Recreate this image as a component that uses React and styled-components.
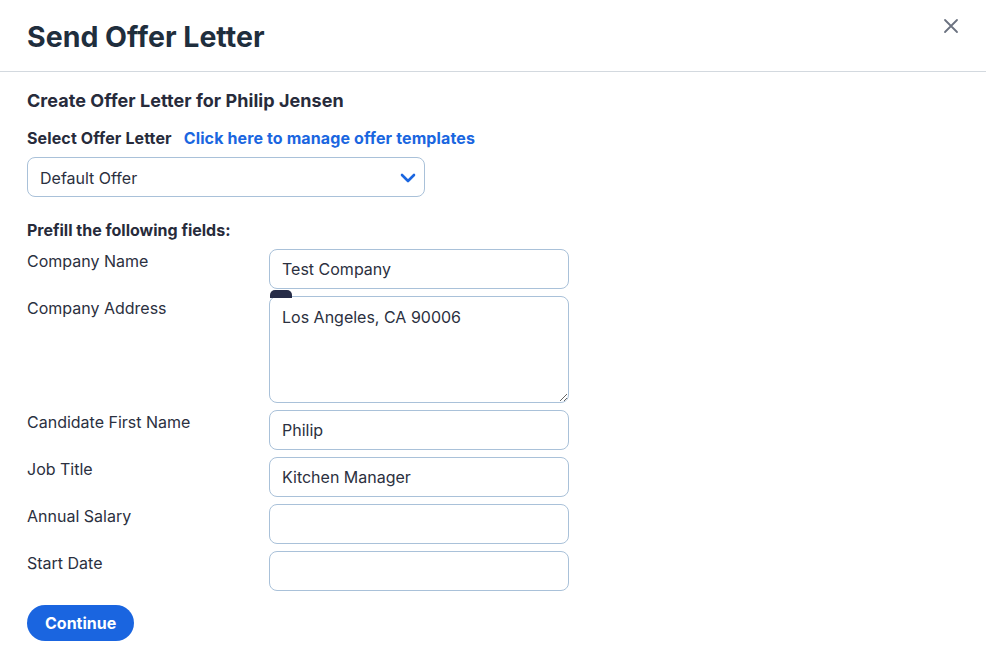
import styled, { createGlobalStyle } from 'styled-components';

const GlobalStyle = createGlobalStyle`
  body {
    margin: 0;
    background: #fff;
    font-family: 'Inter', 'Noto Sans', sans-serif;
    color: #2b3040;
  }
`;

const fields = [
  { label: 'Company Name', value: 'Test Company' },
  { label: 'Company Address', value: 'Los Angeles, CA 90006', multiline: true },
  { label: 'Candidate First Name', value: 'Philip' },
  { label: 'Job Title', value: 'Kitchen Manager' },
  { label: 'Annual Salary', value: '' },
  { label: 'Start Date', value: '' },
];

const App = () => {
  return (
    <>
      <GlobalStyle />
      <Modal>
        <Header>
          <Title>Send Offer Letter</Title>
          <CloseButton aria-label='Close'>
            <svg width='16' height='16' viewBox='0 0 16 16'>
              <path
                d='M2 2 L14 14 M14 2 L2 14'
                stroke='#6b7280'
                strokeWidth='1.8'
                strokeLinecap='round'
              />
            </svg>
          </CloseButton>
        </Header>
        <Body>
          <Heading>Create Offer Letter for Philip Jensen</Heading>
          <SelectRow>
            <BoldLabel>Select Offer Letter</BoldLabel>
            <Link href='#'>Click here to manage offer templates</Link>
          </SelectRow>
          <Select>
            <span>Default Offer</span>
            <svg width='16' height='10' viewBox='0 0 16 10'>
              <path
                d='M2 2 L8 8 L14 2'
                fill='none'
                stroke='#1a66e0'
                strokeWidth='2.6'
                strokeLinecap='round'
                strokeLinejoin='round'
              />
            </svg>
          </Select>
          <PrefillTitle>Prefill the following fields:</PrefillTitle>
          <FieldGrid>
            {fields.map((f) => (
              <Field key={f.label}>
                <FieldLabel>{f.label}</FieldLabel>
                {f.multiline ? (
                  <TextAreaWrap>
                    <Tab />
                    <TextArea defaultValue={f.value} />
                  </TextAreaWrap>
                ) : (
                  <Input defaultValue={f.value} />
                )}
              </Field>
            ))}
          </FieldGrid>
          <ContinueButton>Continue</ContinueButton>
        </Body>
      </Modal>
    </>
  );
};

const Modal = styled.div`
  width: 986px;
  height: 650px;
  background: #fff;
`;

const Header = styled.div`
  display: flex;
  align-items: center;
  height: 72px;
  padding: 0 26px 0 27px;
  border-bottom: 1px solid #d3d9df;
  box-sizing: border-box;
  position: relative;
`;

const Title = styled.h1`
  margin: 0;
  font-size: 28.5px;
  font-weight: 700;
  color: #1f2e3d;
  letter-spacing: 0;
  padding-top: 2px;
`;

const CloseButton = styled.button`
  position: absolute;
  top: 17px;
  right: 26px;
  border: none;
  background: none;
  padding: 0;
  width: 18px;
  height: 18px;
  display: flex;
  align-items: center;
  justify-content: center;
  cursor: pointer;
`;

const Body = styled.div`
  padding: 18px 27px 0 27px;
  display: flex;
  flex-direction: column;
  align-items: flex-start;
`;

const Heading = styled.h2`
  margin: 0;
  font-size: 18px;
  font-weight: 700;
  color: #272b3b;
  line-height: 22px;
  letter-spacing: 0.05px;
`;

const SelectRow = styled.div`
  display: flex;
  gap: 12px;
  margin-top: 16px;
  line-height: 20px;
  letter-spacing: 0.12px;
`;

const BoldLabel = styled.span`
  font-size: 16px;
  font-weight: 700;
  color: #272b3b;
`;

const Link = styled.a`
  font-size: 16px;
  font-weight: 700;
  color: #1a66e0;
  text-decoration: none;
`;

const Select = styled.div`
  margin-top: 9px;
  width: 398px;
  height: 40px;
  box-sizing: border-box;
  border: 1px solid #a9c1d9;
  border-radius: 8px;
  display: flex;
  align-items: center;
  justify-content: space-between;
  padding: 2px 8px 0 12px;
  font-size: 16px;
  color: #2b3040;
`;

const PrefillTitle = styled.div`
  margin-top: 23px;
  font-size: 16px;
  font-weight: 700;
  color: #272b3b;
  line-height: 20px;
`;

const FieldGrid = styled.div`
  display: flex;
  flex-direction: column;
  gap: 7px;
  margin-top: 9px;
`;

const Field = styled.div`
  display: grid;
  grid-template-columns: 242px 300px;
  align-items: start;
`;

const FieldLabel = styled.div`
  font-size: 16px;
  color: #2b3040;
  padding-top: 2px;
  line-height: 20px;
`;

const inputBase = `
  width: 300px;
  box-sizing: border-box;
  border: 1px solid #a9c1d9;
  border-radius: 8px;
  padding: 0 12px;
  font-family: 'Inter', 'Noto Sans', sans-serif;
  font-size: 16px;
  color: #2b3040;
  background: #fff;
  outline: none;
`;

const Input = styled.input`
  ${inputBase}
  height: 40px;
`;

const TextAreaWrap = styled.div`
  position: relative;
  display: flex;
`;

const Tab = styled.div`
  position: absolute;
  top: -6px;
  left: 1px;
  width: 22px;
  height: 8px;
  background: #262c47;
  border-radius: 5px 5px 0 0;
`;

const TextArea = styled.textarea`
  ${inputBase}
  height: 107px;
  padding-top: 10px;
  line-height: 20px;
  resize: vertical;
  display: block;
`;

const ContinueButton = styled.button`
  margin-top: 14px;
  height: 36px;
  padding: 0 18px;
  border: none;
  border-radius: 18px;
  background: #1a65e0;
  color: #fff;
  font-family: 'Inter', 'Noto Sans', sans-serif;
  font-size: 16px;
  font-weight: 700;
  cursor: pointer;
`;

export default App;
